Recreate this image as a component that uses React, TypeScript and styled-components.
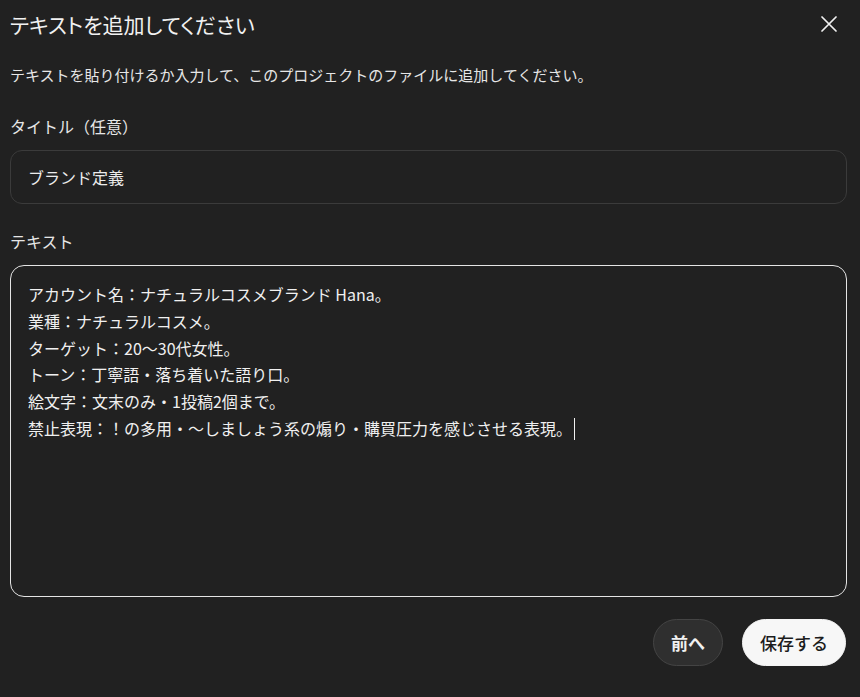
import React from 'react';
import styled, { createGlobalStyle } from 'styled-components';

const GlobalStyle = createGlobalStyle`
  html, body {
    margin: 0;
    padding: 0;
    background: #212121;
  }
  body {
    font-family: "Noto Sans CJK JP", "Noto Sans", sans-serif;
    color: #ececec;
  }
`;

const Dialog = styled.div`
  display: flex;
  flex-direction: column;
  padding: 0 13px 0 10px;
  height: 697px;
  box-sizing: border-box;
`;

const Header = styled.div`
  display: flex;
  align-items: center;
  justify-content: space-between;
  height: 48px;
`;

const Title = styled.h2`
  margin: 0;
  font-size: 21px;
  font-weight: 400;
  font-feature-settings: "palt";
  line-height: 1;
  color: #f1f1f1;
`;

const CloseButton = styled.button`
  display: flex;
  align-items: center;
  justify-content: center;
  width: 30px;
  height: 30px;
  margin-right: 3px;
  padding: 0;
  border: none;
  background: transparent;
  color: #f1f1f1;
  cursor: pointer;
`;

const Description = styled.p`
  margin: 17px 0 0;
  font-size: 15px;
  line-height: 20px;
  color: #e6e6e6;
`;

const Label = styled.label<{ $gap: number }>`
  display: block;
  margin-top: ${(p) => p.$gap}px;
  font-size: 16px;
  line-height: 20px;
  color: #e6e6e6;
`;

const TitleInput = styled.input`
  margin-top: 14px;
  height: 54px;
  box-sizing: border-box;
  padding: 0 17px;
  border: 1px solid #3b3b3b;
  border-radius: 12px;
  background: #212121;
  color: #ececec;
  font-family: inherit;
  font-size: 16px;
  outline: none;
`;

const TextBox = styled.div`
  margin-top: 14px;
  height: 332px;
  box-sizing: border-box;
  padding: 15px 17px;
  border: 1.5px solid #e4e4e4;
  border-radius: 14px;
  font-size: 16px;
  line-height: 26.8px;
  color: #f0f0f0;
  white-space: pre-wrap;
`;

const Caret = styled.span`
  display: inline-block;
  width: 1px;
  height: 22px;
  margin-left: 2px;
  vertical-align: -5px;
  background: #f0f0f0;
`;

const Footer = styled.div`
  display: flex;
  justify-content: flex-end;
  gap: 19px;
  margin-top: 22px;
  margin-right: 1px;
`;

const Button = styled.button<{ $primary?: boolean }>`
  height: 47px;
  padding: 0 17px;
  border-radius: 999px;
  font-family: inherit;
  font-size: 17px;
  cursor: pointer;
  border: 1px solid ${(p) => (p.$primary ? '#f5f5f5' : '#444444')};
  background: ${(p) => (p.$primary ? '#f7f7f7' : '#2f2f2f')};
  color: ${(p) => (p.$primary ? '#1c1c1c' : '#f1f1f1')};
  font-weight: ${(p) => (p.$primary ? 500 : 700)};
`;

const lines = [
  'アカウント名：ナチュラルコスメブランド Hana。',
  '業種：ナチュラルコスメ。',
  'ターゲット：20〜30代女性。',
  'トーン：丁寧語・落ち着いた語り口。',
  '絵文字：文末のみ・1投稿2個まで。',
  '禁止表現：！の多用・〜しましょう系の煽り・購買圧力を感じさせる表現。',
];

function App() {
  return (
    <>
      <GlobalStyle />
      <Dialog>
        <Header>
          <Title>テキストを追加してください</Title>
          <CloseButton aria-label="閉じる">
            <svg width="16" height="16" viewBox="0 0 16 16" fill="none">
              <path d="M1 1L15 15M15 1L1 15" stroke="currentColor" strokeWidth="1.7" strokeLinecap="round" />
            </svg>
          </CloseButton>
        </Header>
        <Description>
          テキストを貼り付けるか入力して、このプロジェクトのファイルに追加してください。
        </Description>
        <Label $gap={31}>タイトル（任意）</Label>
        <TitleInput defaultValue="ブランド定義" readOnly />
        <Label $gap={27}>テキスト</Label>
        <TextBox>
          {lines.join('\n')}
          <Caret />
        </TextBox>
        <Footer>
          <Button>前へ</Button>
          <Button $primary>保存する</Button>
        </Footer>
      </Dialog>
    </>
  );
}

export default App;
